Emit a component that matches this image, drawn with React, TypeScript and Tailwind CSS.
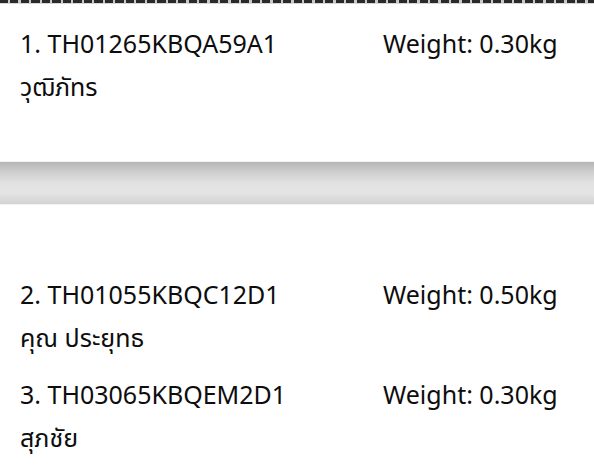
import React from "react";

const font = { fontFamily: '"Noto Sans", "Noto Sans Thai", "Open Sans", sans-serif' };

function Item({ no, code, weight, name }: { no: number; code: string; weight: string; name: string }) {
  return (
    <div className="flex flex-col">
      <div className="flex h-[20px] items-center">
        <div className="w-[383px] pl-[20px]">{`${no}. ${code}`}</div>
        <div>{`Weight: ${weight}kg`}</div>
      </div>
      <div className="mt-[23px] flex h-[20px] items-center pl-[20px]">{name}</div>
    </div>
  );
}

export default function App() {
  return (
    <div
      className="h-[466px] w-[594px] overflow-hidden bg-white text-[25px] leading-none text-[#0d0d0d]"
      style={font}
    >
      <div className="h-[3px] w-full bg-[repeating-linear-gradient(90deg,#2a2a2a_0px,#2a2a2a_8px,#c8c8c8_8px,#c8c8c8_10.5px)]" />
      <div className="h-[1px] w-full bg-[#d8d8d8]" />
      <div className="pt-[29px]">
        <Item no={1} code="TH01265KBQA59A1" weight="0.30" name="วุฒิภัทร" />
      </div>
      <div className="mt-[65px] h-[44px] w-full border-y border-[#f2f2f2] bg-[linear-gradient(180deg,#b6b6b6_0%,#cfcfcf_25%,#e2e2e2_50%,#e4e4e4_75%,#d2d2d2_100%)]" />
      <div className="flex flex-col gap-[37px] pt-[79px]">
        <Item no={2} code="TH01055KBQC12D1" weight="0.50" name="คุณ ประยุทธ" />
        <Item no={3} code="TH03065KBQEM2D1" weight="0.30" name="สุภชัย" />
      </div>
    </div>
  );
}
